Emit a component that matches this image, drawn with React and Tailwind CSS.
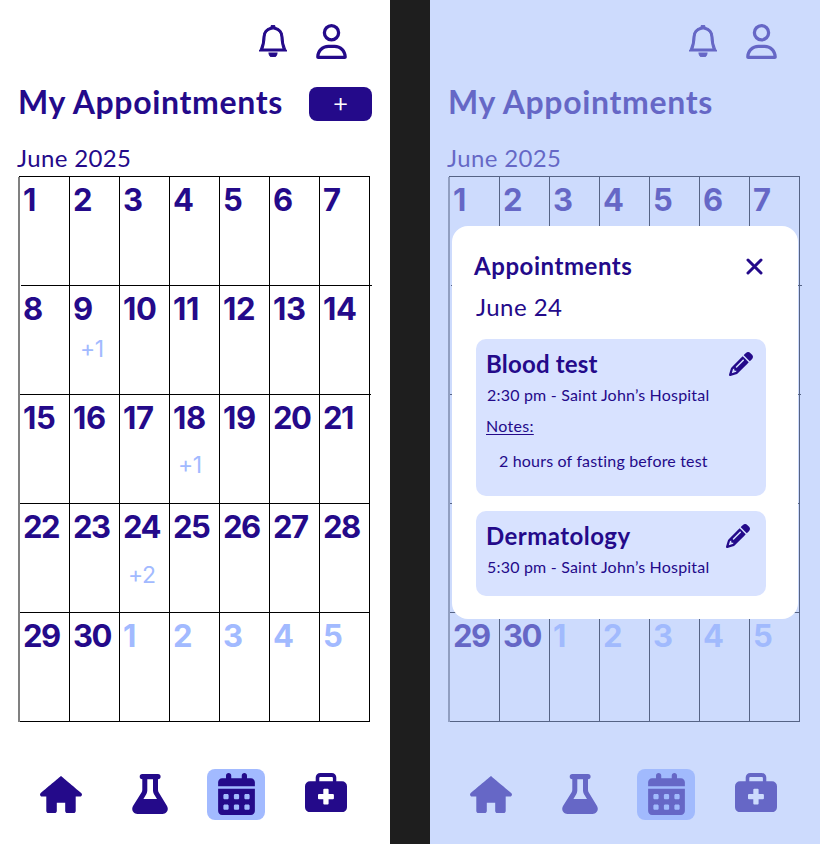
import React from "react";
import { BsBell } from "react-icons/bs";
import { TiHome } from "react-icons/ti";
import { FaRegUser, FaCalendarDays, FaPencil } from "react-icons/fa6";

const NOTES = {
  9: { label: "+1", place: "mt-[6px] pl-[7px]" },
  18: { label: "+1", place: "mt-[13px] pl-[5px]" },
  24: { label: "+2", place: "mt-[14px] pl-[5px]" },
};

const DAYS = Array.from({ length: 35 }, (_, i) => ({
  day: i < 30 ? i + 1 : i - 29,
  next: i >= 30,
}));

function Flask({ className }) {
  return (
    <svg viewBox="0 0 36 40" className={className} fill="currentColor">
      <path
        fillRule="evenodd"
        d="M10.3 0H26A2.5 2.5 0 0 1 26 5.2V15.8Q26 17.2 26.8 18.6L35 32C37 35.5 35 40 30.5 40H5.5C1 40 -1 35.5 1 32L9.5 18.6Q10.3 17.2 10.3 15.8V5.2A2.5 2.5 0 0 1 10.3 0ZM15.3 5.2V16.5Q15.3 18.3 14.4 19.9L11.4 25.1H25L21.9 19.9Q21 18.3 21 16.5V5.2Z"
      />
    </svg>
  );
}

function MedKit({ className }) {
  return (
    <svg viewBox="0 0 42 39" className={className} fill="currentColor">
      <path
        fillRule="evenodd"
        d="M5 8.2H10.7V4.5A4.5 4.5 0 0 1 15.2 0H26.8A4.5 4.5 0 0 1 31.3 4.5V8.2H37A5 5 0 0 1 42 13.2V34.2A5 5 0 0 1 37 39.2H5A5 5 0 0 1 0 34.2V13.2A5 5 0 0 1 5 8.2ZM14.3 8.2H27.9V4.9A1 1 0 0 0 26.9 3.9H15.3A1 1 0 0 0 14.3 4.9ZM19.3 15.7A1 1 0 0 0 18.3 16.7V21H14A1 1 0 0 0 13 22V25.3A1 1 0 0 0 14 26.3H18.3V30.6A1 1 0 0 0 19.3 31.6H22.6A1 1 0 0 0 23.6 30.6V26.3H27.9A1 1 0 0 0 28.9 25.3V22A1 1 0 0 0 27.9 21H23.6V16.7A1 1 0 0 0 22.6 15.7Z"
      />
    </svg>
  );
}

function Calendar() {
  return (
    <div className="relative ml-[18px] mt-[2px] w-[352px]">
      <div className="ml-px h-px bg-black" />
      <div className="grid grid-cols-[repeat(7,50px)] border-l-2 border-[#808080]">
        {DAYS.map(({ day, next }, i) => {
          const note = next ? null : NOTES[day];
          const twenties = day >= 20 && !next;
          return (
            <div
              key={i}
              className="h-[109px] border-b border-r border-black pl-[3px] pt-[3px] font-['Inter',sans-serif]"
            >
              <div
                className={`whitespace-nowrap text-[31px] font-bold leading-10 ${twenties ? "tracking-[-1.6px]" : "tracking-[-0.4px]"} ${next ? "text-[#a2baff]" : ""}`}
              >
                {day}
              </div>
              {note && (
                <div className={`text-[23px] font-normal leading-7 tracking-[-0.5px] text-[#a2baff] ${note.place}`}>
                  {note.label}
                </div>
              )}
            </div>
          );
        })}
      </div>
      <div className="absolute -right-[2px] top-[109px] h-px w-[2px] bg-black" />
      <div className="absolute -right-px top-[218px] h-px w-px bg-black" />
      <div className="absolute left-[2px] top-[109px] h-px w-px bg-white" />
    </div>
  );
}

function Screen({ showAdd }) {
  return (
    <div className="flex h-[844px] w-[390px] flex-col bg-white text-[#240a8a]">
      <div className="flex h-[84px] items-start pl-[259px] pt-6">
        <BsBell className="mt-px h-8 w-7 shrink-0" viewBox="1 0 14 16" strokeWidth="0.55" />
        <FaRegUser className="ml-[29px] h-[35px] w-[31px]" />
      </div>
      <div className="flex h-10 items-start justify-between pl-[18px] pr-[18px]">
        <h1 className="mt-px whitespace-nowrap text-[32px] font-bold leading-[34px] tracking-[0.65px]">
          My Appointments
        </h1>
        {showAdd && (
          <button className="mt-[3px] h-[34px] w-[63px] rounded-lg bg-[#240a8a] pb-[2px] font-['Inter',sans-serif] text-[27px] font-light leading-8 text-white">
            +
          </button>
        )}
      </div>
      <div className="ml-[17px] mt-[18px] h-8 whitespace-nowrap text-[24px] leading-8 tracking-[0.35px]">
        June 2025
      </div>
      <Calendar />
      <nav className="mt-[47px] flex h-[51px] items-start pl-10">
        <TiHome className="mt-[7px] h-[37px] w-[42px]" viewBox="2 3 20 18" preserveAspectRatio="none" />
        <Flask className="ml-[50px] mt-[5px] h-10 w-9" />
        <div className="ml-[39px] flex h-[51px] w-[58px] justify-center rounded-lg bg-[#a2baff] pt-1">
          <FaCalendarDays className="h-[42px] w-[37px]" />
        </div>
        <MedKit className="ml-10 mt-1 h-[39px] w-[42px]" />
      </nav>
    </div>
  );
}

function Modal() {
  return (
    <div className="absolute left-[22px] top-[226px] flex h-[393px] w-[346px] flex-col rounded-2xl bg-white px-6 text-[#240a8a]">
      <div className="mt-6 flex h-8 items-start justify-between">
        <h2 className="-ml-[2px] mt-px whitespace-nowrap text-[24px] font-bold leading-[30px] tracking-[0.55px]">
          Appointments
        </h2>
        <svg viewBox="0 0 17 17" className="mr-[11px] mt-[8px] h-[17px] w-[17px]">
          <path d="M2 2L15 15M15 2L2 15" stroke="currentColor" strokeWidth="3" strokeLinecap="round" />
        </svg>
      </div>
      <div className="mt-[9px] h-8 whitespace-nowrap text-[24px] leading-8 tracking-[0.45px]">June 24</div>
      <div className="mt-[16px] flex h-[157px] w-[290px] flex-col rounded-[10px] bg-[#d8e2ff] pl-[11px]">
        <div className="mt-2 flex justify-between pr-[13px]">
          <h3 className="-ml-px h-8 whitespace-nowrap pt-px text-[24px] font-bold leading-8 tracking-[0.2px]">
            Blood test
          </h3>
          <FaPencil className="mt-[5px] h-6 w-6" />
        </div>
        <p className="mt-1 whitespace-nowrap text-[16px] leading-6 tracking-[0.2px]">
          2:30 pm - Saint John’s Hospital
        </p>
        <p className="-ml-px mt-[7px] whitespace-nowrap text-[16px] leading-6 tracking-[0.3px] underline underline-offset-2">
          Notes:
        </p>
        <p className="ml-3 mt-[11px] whitespace-nowrap text-[16px] leading-6 tracking-[0.18px]">
          2 hours of fasting before test
        </p>
      </div>
      <div className="mt-[15px] flex h-[85px] w-[290px] flex-col rounded-[10px] bg-[#d8e2ff] pl-[11px]">
        <div className="mt-2 flex justify-between pr-4">
          <h3 className="-ml-px h-8 whitespace-nowrap pt-px text-[24px] font-bold leading-8 tracking-[0.45px]">
            Dermatology
          </h3>
          <FaPencil className="mt-[5px] h-6 w-6" />
        </div>
        <p className="mt-1 whitespace-nowrap text-[16px] leading-6 tracking-[0.2px]">
          5:30 pm - Saint John’s Hospital
        </p>
      </div>
    </div>
  );
}

export default function App() {
  return (
    <div className="flex h-[844px] w-[820px] justify-between overflow-hidden bg-[#1e1e1e] font-['Lato',sans-serif]">
      <Screen showAdd />
      <div className="relative">
        <Screen />
        <div className="absolute inset-0 bg-[#a1bbfb]/53" />
        <Modal />
      </div>
    </div>
  );
}
